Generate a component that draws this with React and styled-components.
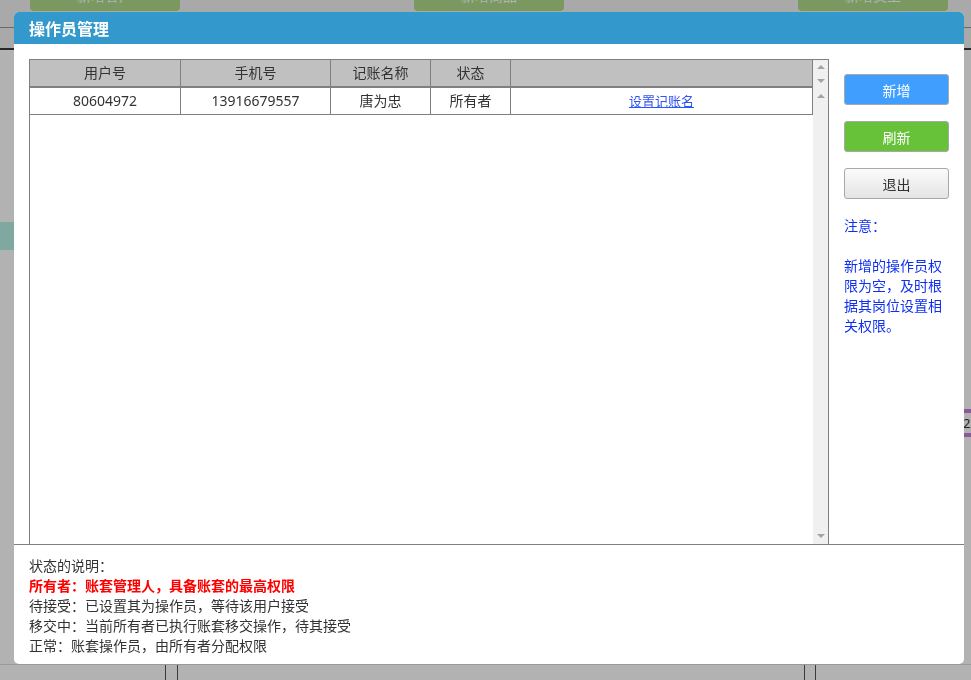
import React from 'react'
import styled, { createGlobalStyle } from 'styled-components'

const GlobalStyle = createGlobalStyle`
    html, body {
        margin:0;
        padding:0;
        background:#fff;
        font-family:"Noto Sans","Noto Sans CJK SC",sans-serif;
        font-size:14px;
        color:#333;
    }
`;

/* ---------- page behind the dialog ---------- */
const Page = styled.div`
    height:680px;
    display:flex;
    flex-direction:column;
    overflow:hidden;
`;
const TopNav = styled.div`
    height:27px;
    background:#f2f2f2;
    border-bottom:1px solid #999;
    display:flex;
    gap:234px;
    padding-left:30px;
`;
const NavButton = styled.div`
    width:150px;
    height:30px;
    margin-top:-19px;
    background:#aedc8c;
    border-radius:4px;
    color:#fff;
    text-align:center;
    line-height:30px;
`;
const SubNav = styled.div`
    height:20px;
    background:#f2f2f2;
    border-bottom:2px solid #3a3a3a;
`;
const Content = styled.div`
    flex:1;
    display:flex;
    justify-content:space-between;
`;
const SideMark = styled.div`
    width:14px;
    height:28px;
    margin-top:172px;
    background:#b7f3e5;
`;
const Tag = styled.div`
    width:8px;
    height:20px;
    margin-top:359px;
    border-top:4px solid #c582dc;
    border-bottom:4px solid #c582dc;
    font-size:13px;
    line-height:20px;
    overflow:hidden;
    color:#333;
`;
const Footer = styled.div`
    height:15px;
    display:flex;
    padding-left:165px;
    border-top:1px solid #ddd;
`;
const FooterCol = styled.div`
    width:${p => p.w}px;
    border-left:1px solid #555;
`;

/* ---------- dialog ---------- */
const Overlay = styled.div`
    position:fixed;
    inset:0;
    background:rgba(0,0,0,0.3);
`;
const Dialog = styled.div`
    position:fixed;
    left:14px;
    top:12px;
    width:950px;
    height:652px;
    background:#fff;
    border-radius:5px;
    overflow:hidden;
    display:flex;
    flex-direction:column;
`;
const DialogHeader = styled.div`
    height:32px;
    background:#3399cc;
    color:#fff;
    font-weight:700;
    font-size:16px;
    line-height:32px;
    padding-left:15px;
    font-family:"Noto Sans CJK SC",sans-serif;
`;
const Main = styled.div`
    height:485px;
    padding-top:15px;
    padding-left:15px;
    display:flex;
`;
const Frame = styled.div`
    width:798px;
    border:1px solid #808080;
    border-bottom:none;
    display:flex;
    flex-direction:column;
`;
const HeadRow = styled.div`
    display:flex;
    height:28px;
`;
const BodyArea = styled.div`
    flex:1;
    display:flex;
`;
const Grid = styled.div`
    width:783px;
    display:flex;
    flex-direction:column;
`;
const Row = styled.div`
    display:flex;
    height:26px;
    background:${p => p.head ? '#c0c0c0' : '#fff'};
    border-bottom:${p => p.head ? '2px' : '1px'} solid #808080;
`;
const Cell = styled.div`
    width:${p => p.w}px;
    box-sizing:border-box;
    border-right:1px solid #808080;
    text-align:center;
    line-height:26px;
    color:#333;
    white-space:nowrap;
`;
const Link = styled.a`
    color:#3355ee;
    font-size:13px;
    text-decoration:underline;
    text-decoration-color:#1a5cff;
    cursor:pointer;
`;
const Gutter = styled.div`
    width:15px;
    background:#f0f0f0;
    display:flex;
    flex-direction:column;
    align-items:center;
    justify-content:space-between;
    padding:${p => p.head ? '5px 0 5px' : '6px 0 6px'};
    box-sizing:border-box;
`;
const Arrow = styled.div`
    width:0;
    height:0;
    border-left:4px solid transparent;
    border-right:4px solid transparent;
    ${p => p.down
        ? 'border-top:4px solid #a3a3a3;'
        : 'border-bottom:4px solid #a3a3a3;'}
`;

const Side = styled.div`
    width:105px;
    padding:15px 15px 0;
    display:flex;
    flex-direction:column;
    gap:16px;
`;
const Button = styled.button`
    height:31px;
    width:105px;
    border:1px solid #a8a8a8;
    border-radius:3px;
    font-family:"Noto Sans","Noto Sans CJK SC",sans-serif;
    font-size:14px;
    color:${p => p.dark ? '#333' : '#fff'};
    background:${p => p.bg};
    cursor:pointer;
    padding:0;
`;
const Note = styled.div`
    margin-top:1px;
    color:#1030f0;
    line-height:20px;
    font-size:14px;
`;

const Legend = styled.div`
    flex:1;
    border-top:1px solid #808080;
    padding:11px 15px 0;
    line-height:20px;
    color:#333;
`;
const Line = styled.div`
    color:${p => p.red ? '#ff0000' : '#333'};
    font-weight:${p => p.red ? 700 : 400};
`;

const columns = [151, 150, 100, 80, 302];
const heads = ['用户号', '手机号', '记账名称', '状态', ''];

const App = () => {
    return (
        <>
            <GlobalStyle />
            <Page>
                <TopNav>
                    <NavButton>新增客户</NavButton>
                    <NavButton>新增商品</NavButton>
                    <NavButton>新增员工</NavButton>
                </TopNav>
                <SubNav />
                <Content>
                    <SideMark />
                    <Tag>22</Tag>
                </Content>
                <Footer>
                    <FooterCol w={11} />
                    <FooterCol w={626} />
                    <FooterCol w={10} />
                    <FooterCol w={150} />
                </Footer>
            </Page>
            <Overlay />
            <Dialog>
                <DialogHeader>操作员管理</DialogHeader>
                <Main>
                    <Frame>
                        <HeadRow>
                            <Grid>
                                <Row head>
                                    {heads.map((h, i) => <Cell key={i} w={columns[i]}>{h}</Cell>)}
                                </Row>
                            </Grid>
                            <Gutter head>
                                <Arrow />
                                <Arrow down />
                            </Gutter>
                        </HeadRow>
                        <BodyArea>
                            <Grid>
                                <Row>
                                    <Cell w={columns[0]}>80604972</Cell>
                                    <Cell w={columns[1]}>13916679557</Cell>
                                    <Cell w={columns[2]}>唐为忠</Cell>
                                    <Cell w={columns[3]}>所有者</Cell>
                                    <Cell w={columns[4]}><Link>设置记账名</Link></Cell>
                                </Row>
                            </Grid>
                            <Gutter>
                                <Arrow />
                                <Arrow down />
                            </Gutter>
                        </BodyArea>
                    </Frame>
                    <Side>
                        <Button bg="#409eff">新增</Button>
                        <Button bg="#67c23a">刷新</Button>
                        <Button dark bg="linear-gradient(#fbfbfb,#e4e4e4)">退出</Button>
                        <Note>
                            注意：<br /><br />
                            新增的操作员权限为空，及时根据其岗位设置相关权限。
                        </Note>
                    </Side>
                </Main>
                <Legend>
                    <Line>状态的说明：</Line>
                    <Line red>所有者：账套管理人，具备账套的最高权限</Line>
                    <Line>待接受：已设置其为操作员，等待该用户接受</Line>
                    <Line>移交中：当前所有者已执行账套移交操作，待其接受</Line>
                    <Line>正常：账套操作员，由所有者分配权限</Line>
                </Legend>
            </Dialog>
        </>
    )
}

export default App
